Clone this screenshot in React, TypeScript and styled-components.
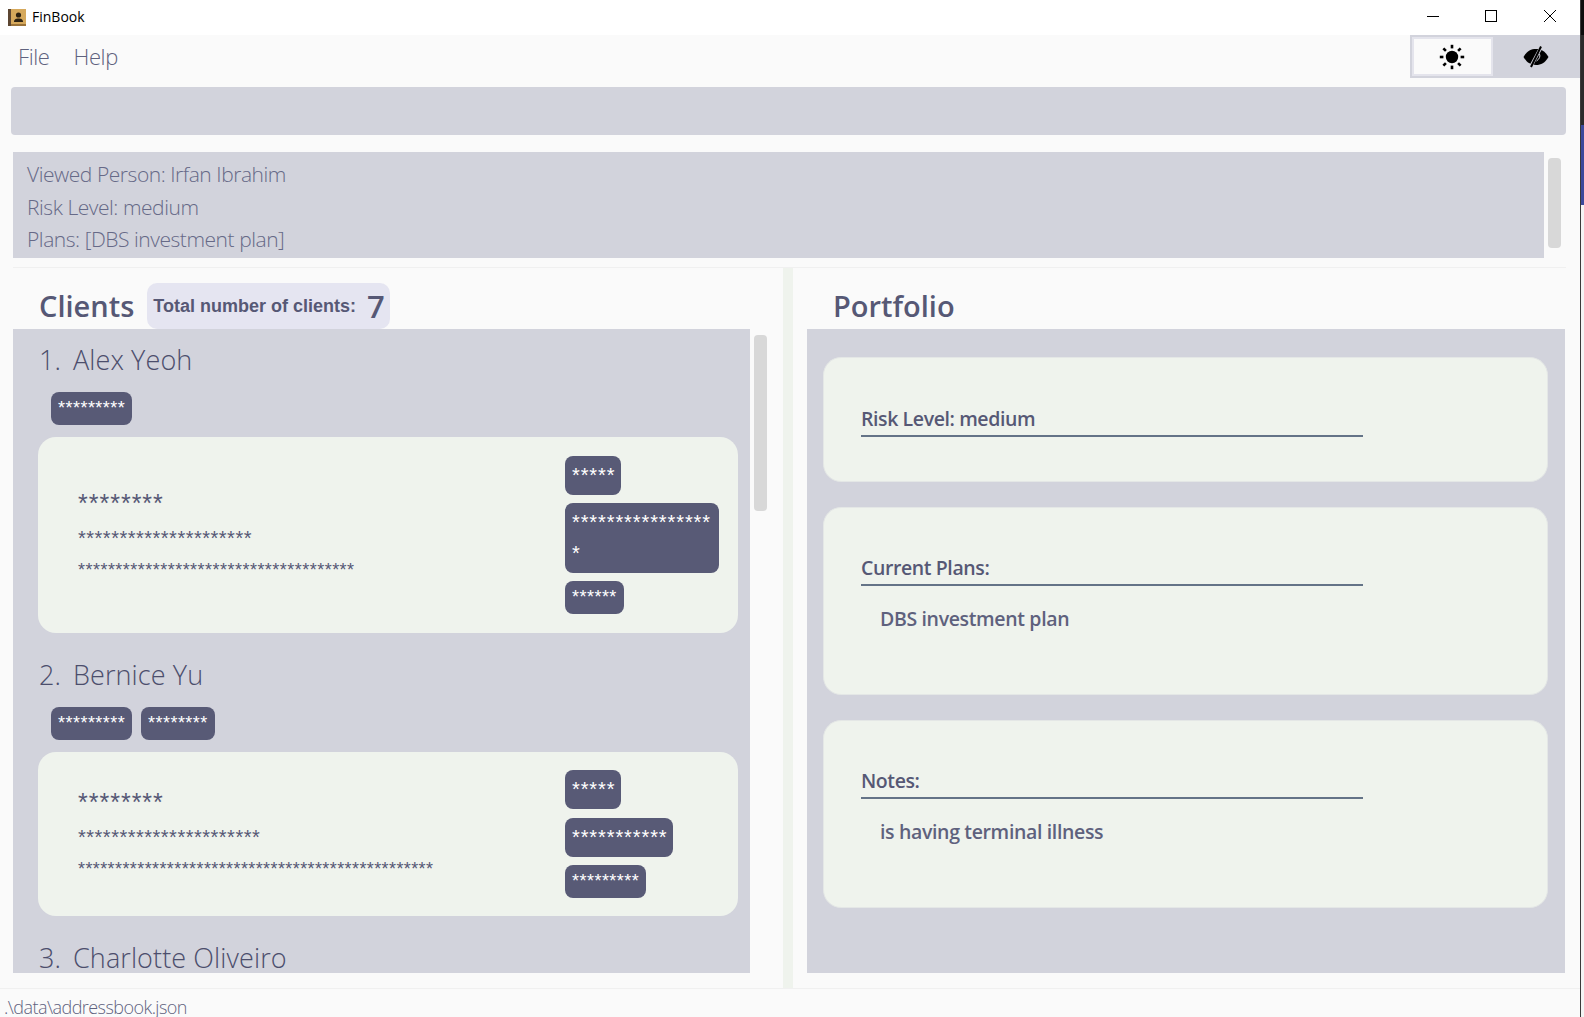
import React from "react";
import styled, { createGlobalStyle } from "styled-components";

const Global = createGlobalStyle`
  html, body { margin: 0; padding: 0; width: 1584px; height: 1017px; overflow: hidden; background: #fafafa; }
  * { box-sizing: border-box; }
  body { font-family: "Open Sans", "Noto Sans", sans-serif; color: #565875; }
`;

const Screen = styled.div`
  display: flex;
  width: 1584px;
  height: 1017px;
`;
const Win = styled.div`
  width: 1580px;
  height: 1017px;
  display: flex;
  flex-direction: column;
  background: #fafafa;
  overflow: hidden;
`;
const Desktop = styled.div`
  width: 4px;
  height: 1017px;
  display: flex;
  flex-direction: column;
  border-left: 1px solid #3a3a3a;
  background: #f4f4f4;
`;
const DesktopBand = styled.div<{ $h: number; $c: string }>`
  height: ${(p) => p.$h}px;
  background: ${(p) => p.$c};
`;

const TitleBar = styled.div`
  height: 35px;
  flex: none;
  background: #fff;
  display: flex;
  align-items: center;
  padding-left: 8px;
`;
const AppName = styled.span`
  margin: 0 0 2px 6px;
  font-size: 14px;
  color: #000;
  font-family: "Open Sans", sans-serif;
`;
const WinControls = styled.div`
  margin-left: auto;
  display: flex;
  height: 35px;
  align-items: center;
  padding: 0 1px 4px 0;
`;
const WinButton = styled.div`
  width: 58.5px;
  height: 31px;
  display: flex;
  align-items: center;
  justify-content: center;
`;

const MenuRow = styled.div`
  height: 43px;
  flex: none;
  display: flex;
  align-items: center;
  padding-left: 18px;
`;
const MenuItem = styled.span`
  font-size: 22px;
  font-weight: 300;
  color: #5f627e;
  margin: 0 24px 2px 0;
  letter-spacing: -0.4px;
`;
const ToggleGroup = styled.div`
  margin-left: auto;
  width: 170px;
  height: 43px;
  background: #d2d3dc;
  display: flex;
  padding: 2px 0;
`;
const ToggleOn = styled.div`
  margin-left: 2px;
  width: 81px;
  height: 39px;
  background: #fafafa;
  border: 2px solid #e4e4ec;
  display: flex;
  align-items: center;
  justify-content: center;
  padding-right: 2px;
`;
const ToggleOff = styled.div`
  flex: 1;
  display: flex;
  align-items: center;
  justify-content: center;
  padding-right: 1px;
`;

const CommandBox = styled.div`
  flex: none;
  margin: 9px 14px 0 11px;
  height: 48px;
  background: #d2d3dc;
  border-radius: 4px;
`;

const ResultRow = styled.div`
  flex: none;
  margin: 17px 0 0 13px;
  display: flex;
  height: 106px;
`;
const ResultBox = styled.div`
  width: 1531px;
  height: 106px;
  background: #d2d3dc;
  padding: 6px 0 0 14px;
  overflow: hidden;
`;
const ResultLine = styled.div`
  font-size: 21px;
  font-weight: 300;
  line-height: 32.5px;
  color: #666987;
  letter-spacing: -0.45px;
  white-space: nowrap;
`;
const ScrollThumb = styled.div<{ $h: number }>`
  width: 13px;
  height: ${(p) => p.$h}px;
  margin: 6px 0 0 4px;
  background: #d8d8d8;
  border-radius: 4px;
  flex: none;
`;

const Rule = styled.div`
  flex: none;
  height: 1px;
  margin: 9px 14px 0 13px;
  background: #f0f0f0;
`;

const Main = styled.div`
  flex: none;
  height: 720px;
  display: flex;
`;
const LeftCol = styled.div`
  width: 783px;
  padding-left: 13px;
  flex: none;
`;
const Splitter = styled.div`
  width: 10px;
  flex: none;
  background: #eff3ed;
`;
const RightCol = styled.div`
  flex: 1;
  padding-left: 14px;
`;
const Header = styled.div`
  height: 61px;
  display: flex;
  align-items: flex-end;
`;
const PanelTitle = styled.h2<{ $left: number }>`
  margin: 0 0 0 ${(p) => p.$left}px;
  font-size: 29px;
  line-height: 46px;
  font-weight: 600;
  color: #565875;
`;
const CountChip = styled.div`
  margin-left: 13px;
  width: 243px;
  height: 46px;
  background: #e5e5f1;
  border-radius: 10px;
  display: flex;
  align-items: center;
  padding-left: 6px;
`;
const CountLabel = styled.span`
  font-family: "Liberation Sans", sans-serif;
  font-weight: 700;
  font-size: 18px;
  color: #565875;
`;
const CountNumber = styled.span`
  margin-left: 11px;
  font-size: 31px;
  font-weight: 600;
  color: #565875;
`;
const Body = styled.div`
  height: 644px;
  display: flex;
`;
const List = styled.div`
  width: 737px;
  height: 644px;
  background: #d2d3dc;
  overflow: hidden;
`;
const Item = styled.div`
  padding-bottom: 11px;
`;
const NameRow = styled.div`
  height: 63px;
  padding: 8.5px 0 0 26px;
  font-size: 27px;
  line-height: 44px;
  font-weight: 300;
  color: #4c4e6c;
  letter-spacing: 0.1px;
  white-space: nowrap;
`;
const NameIndex = styled.span`
  display: inline-block;
  width: 34px;
`;
const TagRow = styled.div`
  display: flex;
  gap: 9px;
  padding-left: 38px;
  margin-bottom: 12px;
`;
const Tag = styled.div<{ $big?: boolean; $w: number }>`
  width: ${(p) => p.$w}px;
  padding: 4px 0 4px 7px;
  background: #585a76;
  border-radius: 8px;
  color: #fff;
  font-family: "Liberation Sans", sans-serif;
  font-size: ${(p) => (p.$big ? 20 : 18)}px;
  letter-spacing: ${(p) => (p.$big ? 0.9 : 0.47)}px;
  line-height: ${(p) => (p.$big ? 31 : 25)}px;
  word-break: break-all;
`;
const Card = styled.div<{ $pad: number }>`
  margin-left: 25px;
  width: 700px;
  padding: ${(p) => p.$pad}px 0;
  background: #eff3ed;
  border-radius: 18px;
  display: flex;
  align-items: center;
`;
const Secrets = styled.div`
  width: 527px;
  padding-left: 40px;
  flex: none;
`;
const Secret = styled.div<{ $h: number; $fs: number; $ls: number }>`
  height: ${(p) => p.$h}px;
  line-height: ${(p) => p.$h}px;
  font-family: "Liberation Sans", sans-serif;
  font-size: ${(p) => p.$fs}px;
  letter-spacing: ${(p) => p.$ls}px;
  color: #565875;
  white-space: nowrap;
`;
const TagStack = styled.div<{ $gap: number }>`
  display: flex;
  flex-direction: column;
  gap: ${(p) => p.$gap}px;
  align-items: flex-start;
`;
const Portfolio = styled.div`
  width: 758px;
  height: 644px;
  background: #d2d3dc;
  padding: 28px 17px 0 16px;
  display: flex;
  flex-direction: column;
  gap: 25px;
`;
const InfoCard = styled.div<{ $h: number; $top: number }>`
  height: ${(p) => p.$h}px;
  background: #eff3ed;
  border: 1px solid #e4e7e6;
  border-radius: 18px;
  padding: ${(p) => p.$top}px 0 0 37px;
`;
const InfoLabel = styled.div`
  width: 502px;
  height: 33px;
  border-bottom: 2px solid #647387;
  font-size: 19.5px;
  line-height: 29px;
  font-weight: 600;
  color: #565875;
  letter-spacing: -0.4px;
`;
const InfoValue = styled.div`
  margin: 18px 0 0 19px;
  font-size: 19.5px;
  line-height: 29px;
  font-weight: 600;
  color: #5e617d;
  letter-spacing: -0.35px;
`;
const Footer = styled.div`
  flex: none;
  border-top: 1px solid #f0f0f0;
  height: 29px;
  padding-left: 4px;
  font-size: 18px;
  line-height: 36px;
  font-weight: 300;
  color: #5f627e;
  letter-spacing: -0.55px;
`;

const AppIcon = () => (
  <svg width="18" height="17" viewBox="0 0 18 17">
    <rect x="0" y="0" width="18" height="17" fill="#d6a95c" />
    <rect x="0" y="0" width="3" height="17" fill="#5c4632" />
    <rect x="3" y="15" width="15" height="2" fill="#9a7238" />
    <circle cx="10.5" cy="6" r="2.6" fill="#2d2212" />
    <path d="M6 13c0-3 2-3.6 4.5-3.6S15 10 15 13z" fill="#2d2212" />
  </svg>
);
const Minimize = () => (
  <svg width="14" height="14" viewBox="0 0 14 14"><path d="M1 7.5h12" stroke="#000" strokeWidth="1" /></svg>
);
const Maximize = () => (
  <svg width="14" height="14" viewBox="0 0 14 14"><rect x="1.5" y="1.5" width="11" height="11" fill="none" stroke="#000" /></svg>
);
const Close = () => (
  <svg width="14" height="14" viewBox="0 0 14 14"><path d="M1 1l12 12M13 1L1 13" stroke="#000" strokeWidth="1" /></svg>
);
const Sun = () => (
  <svg width="26" height="26" viewBox="0 0 26 26">
    <circle cx="13" cy="13" r="6.2" fill="#000" />
    {[0, 45, 90, 135, 180, 225, 270, 315].map((a) => (
      <rect key={a} x="11.7" y="0.8" width="2.6" height="3.6" fill="#000" transform={`rotate(${a} 13 13)`} />
    ))}
  </svg>
);
const EyeOff = () => (
  <svg width="26" height="22" viewBox="0 0 26 22">
    <path d="M0.5 11C4 5 8 3 13 3s9 2 12.5 8C22 17 18 19 13 19S4 17 0.5 11z" fill="#000" />
    <path d="M18.5 0.5L7.5 21" stroke="#d2d3dc" strokeWidth="3.4" />
    <path d="M18 0.5L8 21" stroke="#000" strokeWidth="2" />
    <path d="M16.5 8c1 2.5 0 5-3 7" stroke="#d2d3dc" strokeWidth="1" fill="none" />
  </svg>
);

const s = (n: number) => "*".repeat(n);

export default function App() {
  return (
    <Screen>
      <Global />
      <Win>
        <TitleBar>
          <AppIcon />
          <AppName>FinBook</AppName>
          <WinControls>
            <WinButton><Minimize /></WinButton>
            <WinButton><Maximize /></WinButton>
            <WinButton><Close /></WinButton>
          </WinControls>
        </TitleBar>
        <MenuRow>
          <MenuItem>File</MenuItem>
          <MenuItem>Help</MenuItem>
          <ToggleGroup>
            <ToggleOn><Sun /></ToggleOn>
            <ToggleOff><EyeOff /></ToggleOff>
          </ToggleGroup>
        </MenuRow>
        <CommandBox />
        <ResultRow>
          <ResultBox>
            <ResultLine>Viewed Person: Irfan Ibrahim</ResultLine>
            <ResultLine>Risk Level: medium</ResultLine>
            <ResultLine>Plans: [DBS investment plan]</ResultLine>
          </ResultBox>
          <ScrollThumb $h={90} />
        </ResultRow>
        <Rule />
        <Main>
          <LeftCol>
            <Header>
              <PanelTitle $left={26}>Clients</PanelTitle>
              <CountChip>
                <CountLabel>Total number of clients:</CountLabel>
                <CountNumber>7</CountNumber>
              </CountChip>
            </Header>
            <Body>
              <List>
                <Item>
                  <NameRow><NameIndex>1.</NameIndex>Alex Yeoh</NameRow>
                  <TagRow><Tag $w={81}>{s(9)}</Tag></TagRow>
                  <Card $pad={19}>
                    <Secrets>
                      <Secret $h={37} $fs={25} $ls={1}>{s(8)}</Secret>
                      <Secret $h={32} $fs={20} $ls={0.5}>{s(21)}</Secret>
                      <Secret $h={32} $fs={18} $ls={0.47}>{s(37)}</Secret>
                    </Secrets>
                    <TagStack $gap={8}>
                      <Tag $big $w={56}>{s(5)}</Tag>
                      <Tag $big $w={154}>{s(17)}</Tag>
                      <Tag $w={59}>{s(6)}</Tag>
                    </TagStack>
                  </Card>
                </Item>
                <Item>
                  <NameRow><NameIndex>2.</NameIndex>Bernice Yu</NameRow>
                  <TagRow><Tag $w={81}>{s(9)}</Tag><Tag $w={74}>{s(8)}</Tag></TagRow>
                  <Card $pad={18}>
                    <Secrets>
                      <Secret $h={37} $fs={25} $ls={1}>{s(8)}</Secret>
                      <Secret $h={32} $fs={20} $ls={0.5}>{s(22)}</Secret>
                      <Secret $h={32} $fs={18} $ls={0.4}>{s(48)}</Secret>
                    </Secrets>
                    <TagStack $gap={8.5}>
                      <Tag $big $w={56}>{s(5)}</Tag>
                      <Tag $big $w={108}>{s(11)}</Tag>
                      <Tag $w={81}>{s(9)}</Tag>
                    </TagStack>
                  </Card>
                </Item>
                <Item>
                  <NameRow><NameIndex>3.</NameIndex>Charlotte Oliveiro</NameRow>
                </Item>
              </List>
              <ScrollThumb $h={176} />
            </Body>
          </LeftCol>
          <Splitter />
          <RightCol>
            <Header>
              <PanelTitle $left={26}>Portfolio</PanelTitle>
            </Header>
            <Portfolio>
              <InfoCard $h={125} $top={46}><InfoLabel>Risk Level: medium</InfoLabel></InfoCard>
              <InfoCard $h={188} $top={45}>
                <InfoLabel>Current Plans:</InfoLabel>
                <InfoValue>DBS investment plan</InfoValue>
              </InfoCard>
              <InfoCard $h={188} $top={45}>
                <InfoLabel>Notes:</InfoLabel>
                <InfoValue>is having terminal illness</InfoValue>
              </InfoCard>
            </Portfolio>
          </RightCol>
        </Main>
        <Footer>.\data\addressbook.json</Footer>
      </Win>
      <Desktop>
        <DesktopBand $h={35} $c="#0c0c0c" />
        <DesktopBand $h={90} $c="#2b2b2b" />
        <DesktopBand $h={80} $c="#3b4a9c" />
      </Desktop>
    </Screen>
  );
}
